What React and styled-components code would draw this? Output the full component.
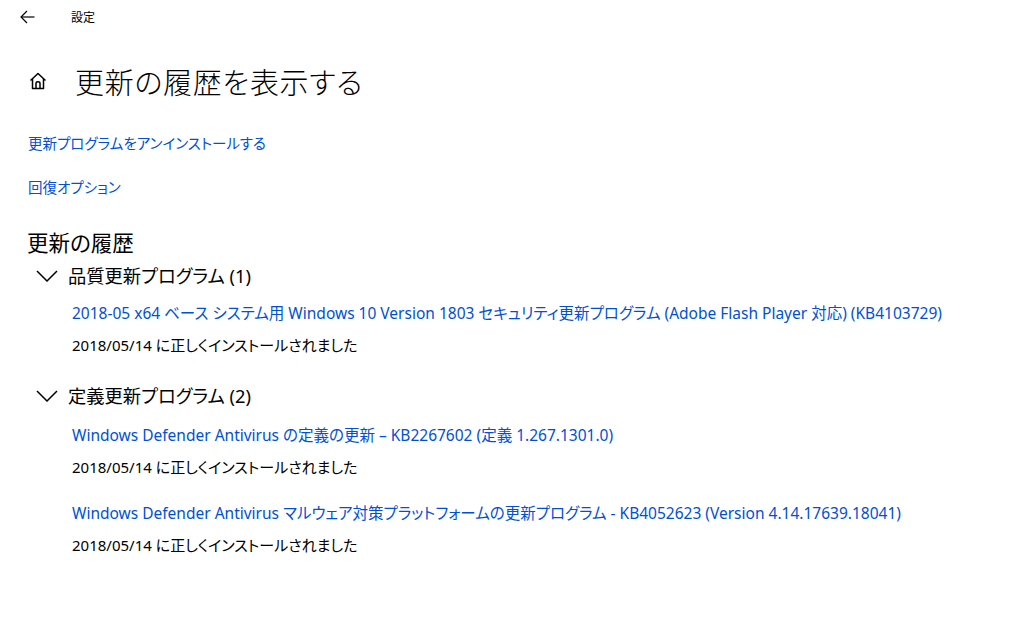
import React from "react";
import styled, { createGlobalStyle } from "styled-components";

const GlobalStyle = createGlobalStyle`
  html, body { margin: 0; padding: 0; background: #ffffff; }
  body {
    font-family: "Noto Sans", "Noto Sans CJK JP", sans-serif;
    color: #000000;
    font-feature-settings: "palt";
    -webkit-font-smoothing: antialiased;
  }
`;

const Page = styled.div`
  width: 1024px;
  height: 624px;
  overflow: hidden;
  background: #ffffff;
  display: flex;
  flex-direction: column;
`;

const TopBar = styled.div`
  height: 34px;
  display: flex;
  align-items: center;
  padding-left: 20px;
`;

const BackButton = styled.button`
  border: 0;
  background: transparent;
  padding: 0;
  width: 15px;
  height: 14px;
  display: flex;
  align-items: center;
  color: #000;
`;

const AppName = styled.span`
  margin-left: 36px;
  font-size: 12px;
  line-height: 16px;
  font-family: "Noto Sans CJK JP", sans-serif;
`;

const Content = styled.main`
  display: flex;
  flex-direction: column;
  align-items: flex-start;
  padding-left: 28px;
`;

const TitleRow = styled.div`
  margin-top: 27px;
  height: 40px;
  display: flex;
  align-items: center;
  margin-left: 1px;
`;

const Title = styled.h1`
  margin: 0 0 0 28px;
  font-size: 29px;
  line-height: 40px;
  font-weight: 300;
  font-family: "Noto Sans CJK JP", sans-serif;
  letter-spacing: 0.7px;
`;

const Link = styled.a`
  display: block;
  margin-top: ${(p) => p.$gap}px;
  font-size: 14.5px;
  line-height: 20px;
  color: #0050d6;
  text-decoration: none;
  cursor: pointer;
  white-space: nowrap;
`;

const SectionTitle = styled.h2`
  margin: 31px 0 0 -1px;
  font-size: 21.5px;
  line-height: 28px;
  font-weight: 400;
  font-family: "Noto Sans CJK JP", sans-serif;
`;

const Group = styled.section`
  display: flex;
  flex-direction: column;
  margin-top: ${(p) => p.$gap}px;
`;

const GroupHeader = styled.div`
  display: flex;
  align-items: center;
  height: 26px;
  padding-left: 8px;
  font-size: 18.3px;
  line-height: 26px;
`;

const Chevron = styled.svg`
  width: 22px;
  height: 12px;
  margin-right: 10px;
  flex: none;
`;

const Entries = styled.div`
  display: flex;
  flex-direction: column;
  gap: 26px;
  padding-left: 44px;
  margin-top: ${(p) => p.$gap}px;
`;

const Entry = styled.div`
  display: flex;
  flex-direction: column;
  gap: 12px;
`;

const EntryLink = styled.a`
  font-size: 15.5px;
  line-height: 20px;
  color: #0050d6;
  text-decoration: none;
  white-space: nowrap;
  cursor: pointer;
`;

const EntryDate = styled.div`
  font-size: 15px;
  line-height: 20px;
  color: #000;
  white-space: nowrap;
`;

const ArrowIcon = () => (
  <svg width="15" height="14" viewBox="0 0 15 14" fill="none" stroke="#000" strokeWidth="1.2">
    <path d="M14.5 7 H1" />
    <path d="M7 1 L1 7 L7 13" />
  </svg>
);

const HomeIcon = () => (
  <svg width="18" height="18" viewBox="0 0 18 18" fill="none" stroke="#000" strokeWidth="1.5" strokeLinejoin="round">
    <path d="M1.5 8.5 L9 1.5 L16.5 8.5" />
    <path d="M3.5 7 V16.5 H14.5 V7" />
    <path d="M7 16.5 V11.5 Q7 9.8 9 9.8 Q11 9.8 11 11.5 V16.5" />
  </svg>
);

const groups = [
  {
    title: "品質更新プログラム (1)",
    gap: 7,
    entriesGap: 14,
    entries: [
      "2018-05 x64 ベース システム用 Windows 10 Version 1803 セキュリティ更新プログラム (Adobe Flash Player 対応) (KB4103729)",
    ],
  },
  {
    title: "定義更新プログラム (2)",
    gap: 28,
    entriesGap: 16,
    entries: [
      "Windows Defender Antivirus の定義の更新 – KB2267602 (定義 1.267.1301.0)",
      "Windows Defender Antivirus マルウェア対策プラットフォームの更新プログラム - KB4052623 (Version 4.14.17639.18041)",
    ],
  },
];

export default function App() {
  return (
    <Page>
      <GlobalStyle />
      <TopBar>
        <BackButton aria-label="戻る">
          <ArrowIcon />
        </BackButton>
        <AppName>設定</AppName>
      </TopBar>
      <Content>
        <TitleRow>
          <HomeIcon />
          <Title>更新の履歴を表示する</Title>
        </TitleRow>
        <Link $gap={32}>更新プログラムをアンインストールする</Link>
        <Link $gap={24}>回復オプション</Link>
        <SectionTitle>更新の履歴</SectionTitle>
        {groups.map((g) => (
          <Group key={g.title} $gap={g.gap}>
            <GroupHeader>
              <Chevron viewBox="0 0 22 12" fill="none" stroke="#000" strokeWidth="1.5">
                <path d="M1 1 L11 11 L21 1" />
              </Chevron>
              {g.title}
            </GroupHeader>
            <Entries $gap={g.entriesGap}>
              {g.entries.map((e) => (
                <Entry key={e}>
                  <EntryLink>{e}</EntryLink>
                  <EntryDate>2018/05/14 に正しくインストールされました</EntryDate>
                </Entry>
              ))}
            </Entries>
          </Group>
        ))}
      </Content>
    </Page>
  );
}
